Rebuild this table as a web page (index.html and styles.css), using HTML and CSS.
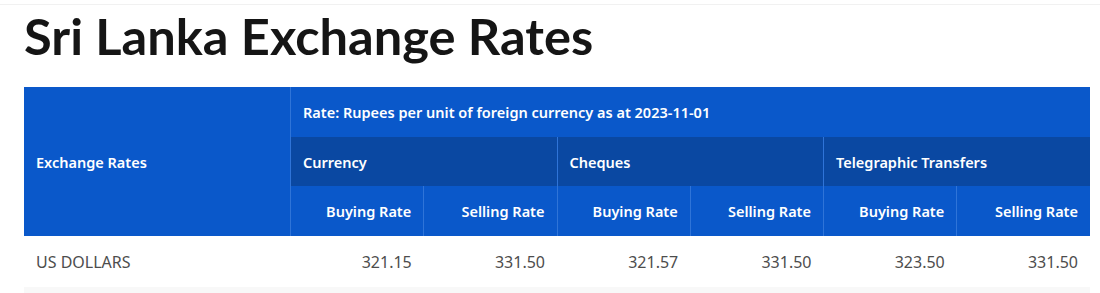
FILE: index.html
```html
<!DOCTYPE html>
<html lang="en">
<head>
<meta charset="utf-8">
<title>Sri Lanka Exchange Rates</title>
<link rel="stylesheet" href="styles.css">
</head>
<body>
<div class="topbar"></div>
<main class="page">
  <h1 class="title">Sri Lanka Exchange Rates</h1>
  <table class="rates">
    <thead>
      <tr class="top">
        <th class="lead" rowspan="3">Exchange Rates</th>
        <th class="caption" colspan="6">Rate: Rupees per unit of foreign currency as at 2023-11-01</th>
      </tr>
      <tr class="groups">
        <th colspan="2">Currency</th>
        <th colspan="2">Cheques</th>
        <th colspan="2">Telegraphic Transfers</th>
      </tr>
      <tr class="subs">
        <th>Buying Rate</th>
        <th>Selling Rate</th>
        <th>Buying Rate</th>
        <th>Selling Rate</th>
        <th>Buying Rate</th>
        <th>Selling Rate</th>
      </tr>
    </thead>
    <tbody>
      <tr>
        <td class="name">US DOLLARS</td>
        <td>321.15</td>
        <td>331.50</td>
        <td>321.57</td>
        <td>331.50</td>
        <td>323.50</td>
        <td>331.50</td>
      </tr>
      <tr class="alt">
        <td class="name">&nbsp;</td>
        <td></td><td></td><td></td><td></td><td></td><td></td>
      </tr>
    </tbody>
  </table>
</main>
</body>
</html>
```
FILE: styles.css
```css
html, body {
  margin: 0;
  padding: 0;
  background: #ffffff;
}
body {
  font-family: "Noto Sans", "Open Sans", sans-serif;
  color: #212529;
}
.topbar {
  height: 4px;
  border-bottom: 1px solid #f1f1f1;
}
.page {
  padding: 0 10px 0 24px;
}
.title {
  margin: 0;
  padding-top: 1px;
  font-family: "Lato", "Noto Sans", sans-serif;
  font-size: 50.6px;
  line-height: 59px;
  font-weight: 700;
  color: #151515;
}
.rates {
  margin-top: 22px;
  width: 1066px;
  border-collapse: collapse;
  table-layout: fixed;
}
.rates th {
  background: #0a58ca;
  color: #ffffff;
  font-size: 14.5px;
  font-weight: 600;
  text-align: left;
  padding: 0 12px;
  border-left: 1px solid #2f74d8;
}
.rates tr.top th {
  height: 50px;
}
.rates th.lead {
  width: 242px;
  border-left: none;
}
.rates .groups th {
  height: 49px;
  background: #0a48a2;
}
.rates .subs th {
  text-align: right;
  height: 50px;
}
.rates td {
  text-align: right;
  padding: 0 12px;
  height: 51px;
  color: #4d4d4d;
  font-size: 16px;
}
.rates td.name {
  text-align: left;
}
.rates tr.alt td {
  background: #f8f8f8;
}
```
